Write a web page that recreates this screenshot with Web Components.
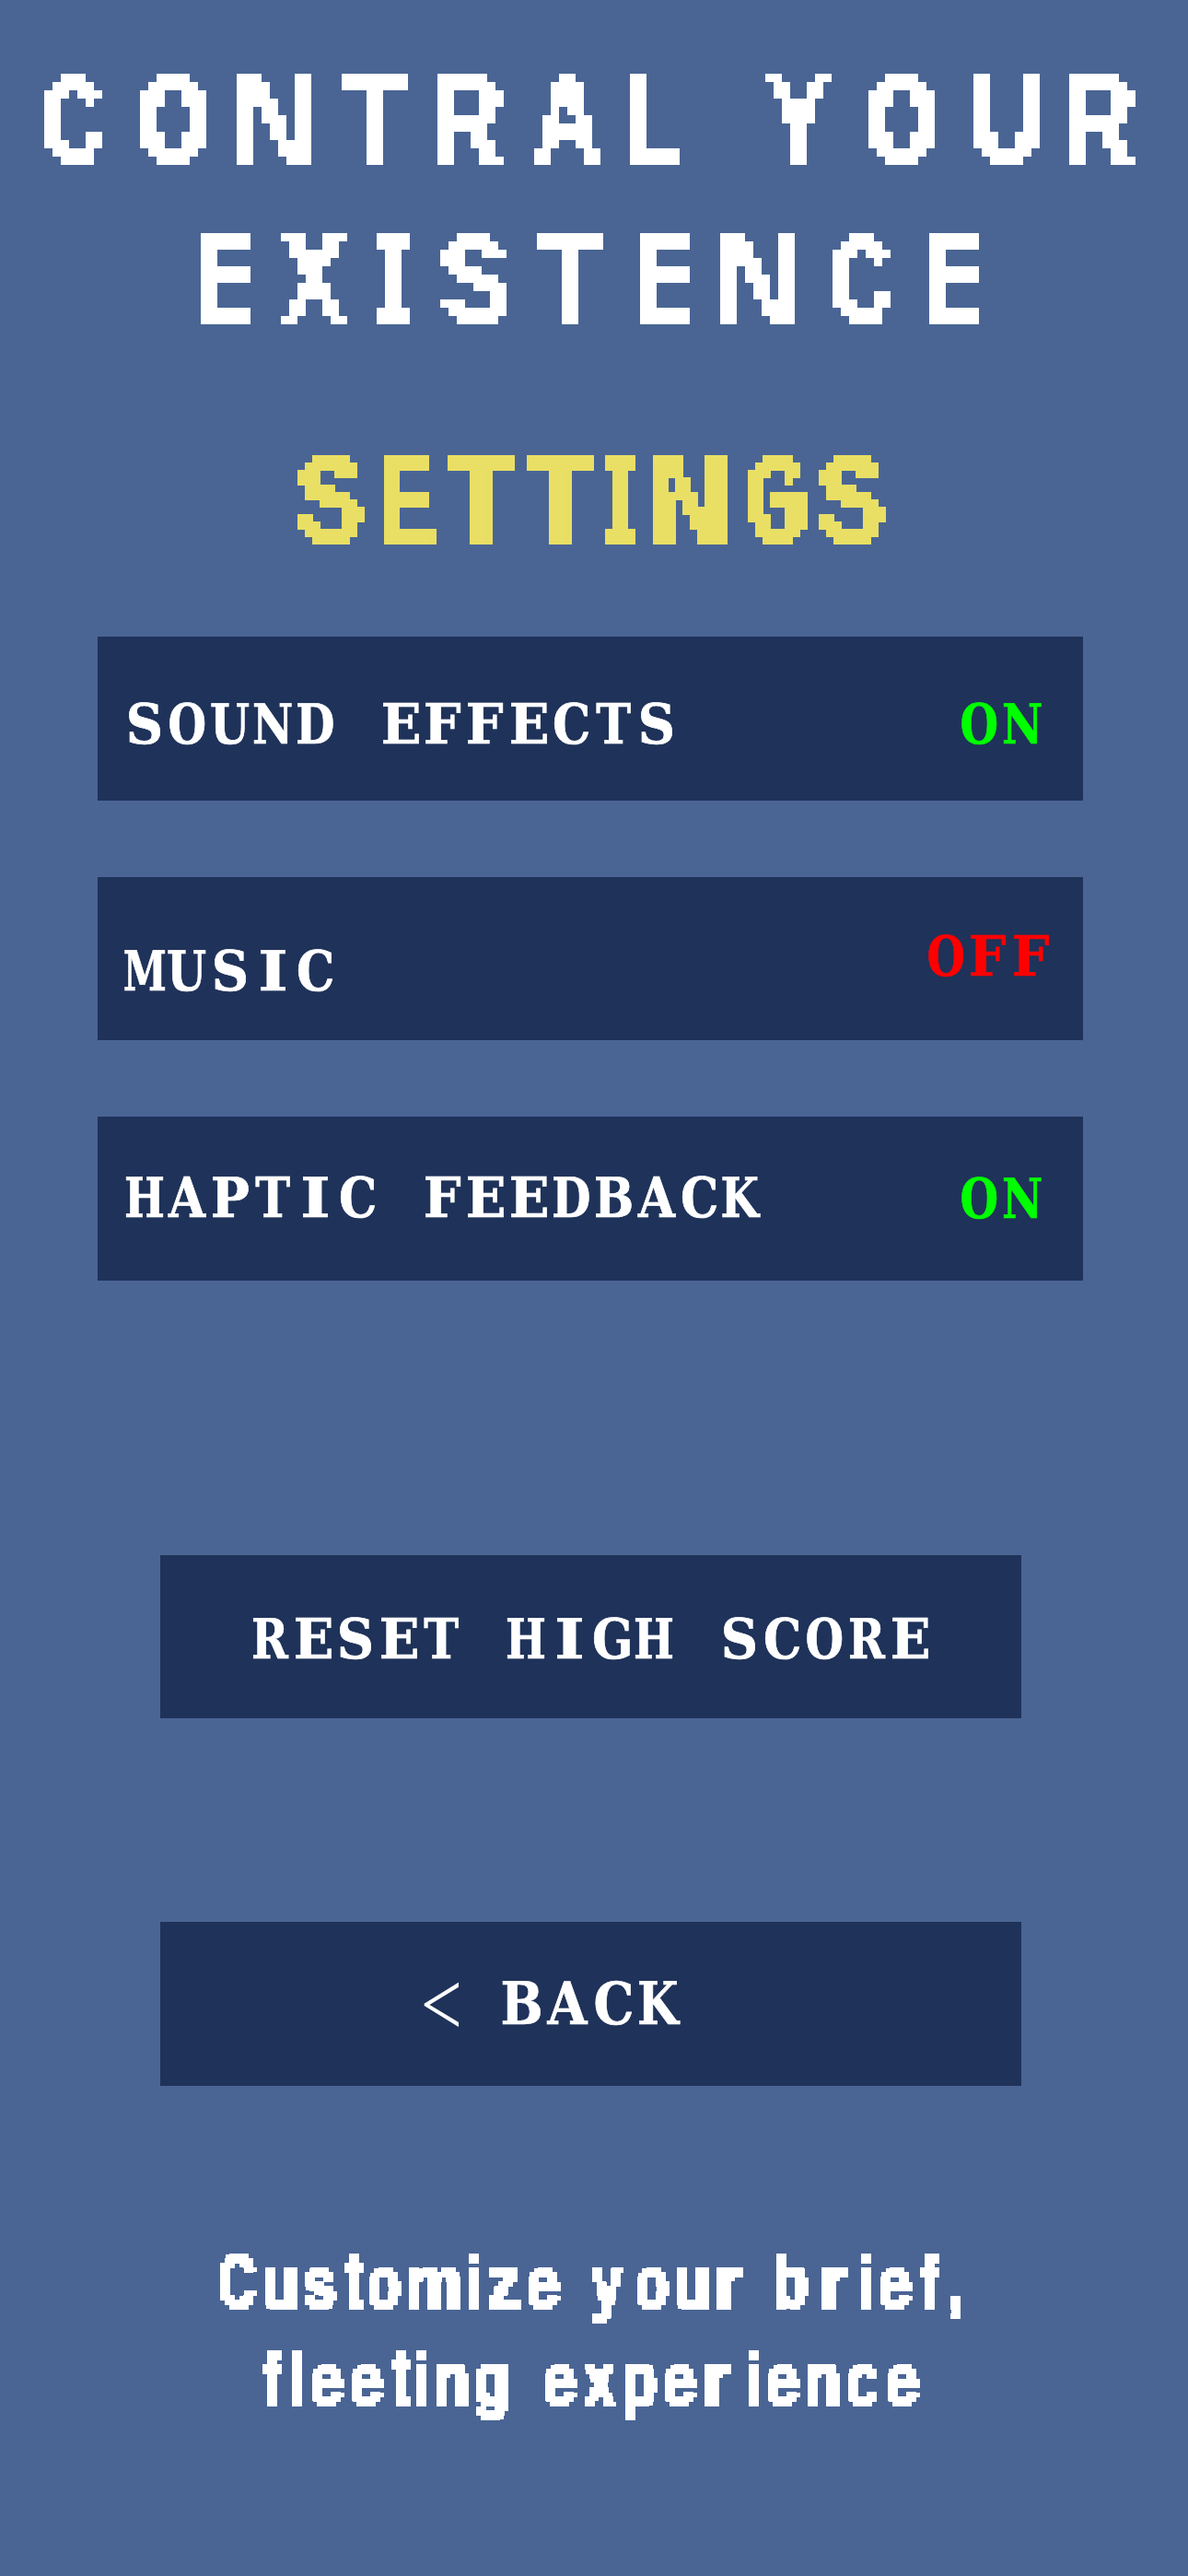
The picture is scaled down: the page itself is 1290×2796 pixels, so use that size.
<!DOCTYPE html>
<html>
<head>
<meta charset="utf-8">
<title>Settings</title>
<style>
    html, body { margin: 0; background: #4a6594; }
</style>
</head>
<body>
<control-screen>
    <pixel-text text="CONTRAL YOUR" cell="9" stroke="2.5" font="bold 150px 'Liberation Mono'" adv="11.6 11.6 12.7 11.6 11.6 11.6 11.6 4.7 12.5 12.6 11.6 8" style="--top:80px"></pixel-text>
    <pixel-text text="EXISTENCE" cell="9" stroke="2.5" font="bold 150px 'Liberation Mono'" adv="9.7 11.5 7.7 11.6 12.5 9.7 13.5 11.7 6" style="--top:47px"></pixel-text>
    <pixel-text text="SETTINGS" cell="8.64" stroke="2.5" font="bold 150px 'Liberation Mono'" adv="10.9 8 9.9 9.9 6 11.9 8.9 8" style="--top:115px;color:#e9df65"></pixel-text>

    <settings-row style="--top:76px;--label-top:66px;--value-top:66px;--pad-l:28px;--pad-r:43px">
        <mono-text slot="label" text="SOUND EFFECTS"></mono-text>
        <mono-text slot="value" text="ON" style="color:#00ff00"></mono-text>
    </settings-row>
    <settings-row style="--top:83px;--label-top:73px;--value-top:57px;--pad-l:28px;--pad-r:33px">
        <mono-text slot="label" text="MUSIC"></mono-text>
        <mono-text slot="value" text="OFF" style="color:#ff0000"></mono-text>
    </settings-row>
    <settings-row style="--top:83px;--label-top:59px;--value-top:60px;--pad-l:28px;--pad-r:43px">
        <mono-text slot="label" text="HAPTIC FEEDBACK"></mono-text>
        <mono-text slot="value" text="ON" style="color:#00ff00"></mono-text>
    </settings-row>

    <menu-button style="--top:298px;--label-top:62px">
        <mono-text text="RESET HIGH SCORE"></mono-text>
    </menu-button>
    <menu-button style="--top:221px;--label-top:58px;--shift:90px">
        <span style="display:inline-block;font:100px/63px 'Liberation Serif',serif;transform:scaleX(.8);margin-right:34px">&lt;</span>
        <mono-text text="BACK" style="--size:63px;--pitch:50px"></mono-text>
    </menu-button>

    <pixel-text text="Customize your brief," cell="5.4" stroke="4.5" font="bold 150px 'Liberation Sans'" adv="9 8 8 5 8 12 4 8 8 4.8 9 8 8 7 5 9.2 7.9 3.9 8 6 2" style="--top:182.5px"></pixel-text>
    <pixel-text text="fleeting experience" cell="5.4" stroke="4.5" font="bold 150px 'Liberation Sans'" adv="6 4 8 8 5 4 8 8 5.9 8 8 8 8 8.8 4 8 8 8 6" style="--top:29px"></pixel-text>
</control-screen>

<script>
// target ink of each pixel glyph, in cells: [width, above baseline, below baseline]
const GLYPHS = {
    C: [7, 11, 0], O: [8, 11, 0], N: [9, 11, 0], T: [8, 11, 0], R: [8, 11, 0], A: [8, 11, 0], L: [6, 11, 0],
    Y: [8, 11, 0], U: [8, 11, 0], E: [6, 11, 0], X: [8, 11, 0], I: [4, 11, 0], S: [8, 11, 0], G: [7, 11, 0],
    u: [6, 8, 0], s: [6, 8, 0], t: [4, 11, 0], o: [6, 8, 0], m: [10, 8, 0], i: [2, 11, 0], z: [6, 8, 0],
    e: [6, 8, 0], y: [6, 8, 3], r: [5, 8, 0], b: [6, 11, 0], f: [4, 11, 0], l: [2, 11, 0], n: [6, 8, 0],
    g: [6, 8, 3], x: [6, 8, 0], p: [6, 8, 3], c: [6, 8, 0], ',': [2, 2, 2]
};
// ink width of the typewriter letters, in px at the 46px pitch
const MONO_WIDTH = { I: 27, M: 44, N: 41, U: 41, H: 41, A: 42, K: 42, T: 38, O: 38, C: 37, G: 39, S: 35 };

const measure = document.createElement('canvas').getContext('2d');

const pixelTemplate = document.createElement('template');
pixelTemplate.innerHTML = `
    <style>
        :host {
            display: block;
            flex: none;
            margin-top: var(--top, 0);
            color: #fff;
        }
        .line {
            display: flex;
            width: max-content;
        }
        .letter {
            flex: none;
            filter: url(#px);
        }
        .space {
            flex: none;
            white-space: pre;
            font-size: 1px;
        }
        .glyph {
            display: block;
            width: max-content;
            white-space: pre;
            transform-origin: 0 0;
        }
    </style>
    <svg width="0" height="0" style="position:absolute">
        <filter id="px" x="0" y="0" width="100%" height="100%" color-interpolation-filters="sRGB">
            <feFlood></feFlood>
            <feComposite></feComposite>
            <feTile result="grid"></feTile>
            <feComposite in="SourceGraphic" in2="grid" operator="in"></feComposite>
            <feComponentTransfer>
                <feFuncA type="discrete" tableValues="0 1"></feFuncA>
            </feComponentTransfer>
            <feMorphology operator="dilate"></feMorphology>
        </filter>
    </svg>
    <div class="line"></div>
`;

class PixelText extends HTMLElement {
    constructor() {
        super();
        this.attachShadow({ mode: 'open' });
        this.shadowRoot.appendChild(pixelTemplate.content.cloneNode(true));
    }

    setupFilter(cell) {
        const root = this.shadowRoot;
        // whole-pixel square that covers one (maybe fractional) cell
        const square = Math.ceil(cell - 0.3);
        const dot = square % 2 ? 1 : 2;
        const at = Math.round((cell - dot) / 2);
        const flood = root.querySelector('feFlood');
        flood.setAttribute('x', at);
        flood.setAttribute('y', at);
        flood.setAttribute('width', dot);
        flood.setAttribute('height', dot);
        const tile = root.querySelector('feComposite');
        tile.setAttribute('width', cell);
        tile.setAttribute('height', cell);
        root.querySelector('feMorphology').setAttribute('radius', (square - dot) / 2);
    }

    connectedCallback() {
        const text = this.getAttribute('text');
        const font = this.getAttribute('font');
        const stroke = this.getAttribute('stroke') || 0;
        const adv = this.getAttribute('adv').split(' ').map(Number);
        const cell = Number(this.getAttribute('cell'));
        const size = parseFloat(font.match(/(\d+)px/)[1]);
        const line = this.shadowRoot.querySelector('.line');
        this.setupFilter(cell);

        // the letters sit on whole pixels, so the same letter always samples the same
        let pen = 0;
        [...text].forEach((ch, i) => {
            const left = Math.round(pen);
            pen += adv[i] * cell;
            const next = Math.round(pen);
            const box = GLYPHS[ch];
            const letter = document.createElement('span');
            if (!box) {
                // a space only moves the pen
                letter.className = 'space';
                letter.style.width = next - left + 'px';
                letter.textContent = ch;
                line.appendChild(letter);
                return;
            }
            const [w, up, down] = box;
            letter.className = 'letter';
            letter.style.width = w * cell + 'px';
            letter.style.height = 14 * cell + 'px';
            letter.style.marginRight = next - left - w * cell + 'px';

            const glyph = document.createElement('span');
            glyph.className = 'glyph';
            glyph.textContent = ch;
            glyph.style.font = font + ', sans-serif';
            glyph.style.lineHeight = size + 'px';
            // N and U close up when they are thickened
            glyph.style.webkitTextStroke = ('NU'.includes(ch) ? 0 : stroke) + 'px currentColor';

            measure.font = font;
            const m = measure.measureText(ch);
            const baseline = (size + m.fontBoundingBoxAscent - m.fontBoundingBoxDescent) / 2;
            const sx = w * cell / (m.actualBoundingBoxRight + m.actualBoundingBoxLeft);
            const sy = (up + down) * cell / (m.actualBoundingBoxAscent + m.actualBoundingBoxDescent);
            const tx = m.actualBoundingBoxLeft * sx;
            const ty = (11 - up) * cell - (baseline - m.actualBoundingBoxAscent) * sy;
            glyph.style.transform = `translate(${tx}px, ${ty}px) scale(${sx}, ${sy})`;

            letter.appendChild(glyph);
            line.appendChild(letter);
        });

        this.style.width = 2 * Math.round(pen / 2) + 'px';
        this.style.height = Math.round(14 * cell) + 'px';
    }
}

const monoTemplate = document.createElement('template');
monoTemplate.innerHTML = `
    <style>
        :host {
            display: inline-flex;
            flex: none;
            font: bold var(--size, 59px)/var(--size, 59px) 'DejaVu Serif', serif;
            -webkit-text-stroke: 0.7px currentColor;
            color: #fff;
        }
        .cell {
            display: inline-block;
            width: var(--pitch, 46.3px);
            white-space: pre;
        }
        .cell b {
            display: block;
            width: max-content;
            font-weight: inherit;
            transform-origin: 0 0;
        }
    </style>
`;

class MonoText extends HTMLElement {
    constructor() {
        super();
        this.attachShadow({ mode: 'open' });
        this.shadowRoot.appendChild(monoTemplate.content.cloneNode(true));
    }

    connectedCallback() {
        const size = parseFloat(this.style.getPropertyValue('--size')) || 59;
        const pitch = parseFloat(this.style.getPropertyValue('--pitch')) || 46.3;
        measure.font = `bold ${size}px 'DejaVu Serif'`;
        [...this.getAttribute('text')].forEach(ch => {
            const cell = document.createElement('span');
            cell.className = 'cell';
            const b = document.createElement('b');
            b.textContent = ch;
            const m = measure.measureText(ch);
            const target = (MONO_WIDTH[ch] || 39) * size / 59;
            const ink = m.actualBoundingBoxRight + m.actualBoundingBoxLeft;
            if (ink > 0) {
                const sx = target / ink;
                b.style.transform = `translateX(${(pitch - target) / 2 + m.actualBoundingBoxLeft * sx}px) scaleX(${sx})`;
            }
            cell.appendChild(b);
            this.shadowRoot.appendChild(cell);
        });
    }
}

const rowTemplate = document.createElement('template');
rowTemplate.innerHTML = `
    <style>
        :host {
            display: flex;
            flex: none;
            justify-content: space-between;
            align-items: flex-start;
            box-sizing: border-box;
            width: 1070px;
            height: 177.5px;
            margin-top: var(--top, 0);
            padding: 0 var(--pad-r, 43px) 0 var(--pad-l, 28px);
            background: #1f3259;
        }
        .label { padding-top: var(--label-top, 66px); }
        .value { padding-top: var(--value-top, 66px); }
    </style>
    <div class="label"><slot name="label"></slot></div>
    <div class="value"><slot name="value"></slot></div>
`;

class SettingsRow extends HTMLElement {
    constructor() {
        super();
        this.attachShadow({ mode: 'open' });
        this.shadowRoot.appendChild(rowTemplate.content.cloneNode(true));
    }
}

const buttonTemplate = document.createElement('template');
buttonTemplate.innerHTML = `
    <style>
        :host {
            display: block;
            flex: none;
            box-sizing: border-box;
            width: 935px;
            height: 177.5px;
            margin-top: var(--top, 0);
            padding-top: var(--label-top, 62px);
            padding-right: var(--shift, 0);
            background: #1f3259;
            color: #fff;
        }
        .inner {
            display: flex;
            justify-content: center;
            align-items: center;
        }
    </style>
    <div class="inner"><slot></slot></div>
`;

class MenuButton extends HTMLElement {
    constructor() {
        super();
        this.attachShadow({ mode: 'open' });
        this.shadowRoot.appendChild(buttonTemplate.content.cloneNode(true));
    }
}

const screenTemplate = document.createElement('template');
screenTemplate.innerHTML = `
    <style>
        :host {
            display: flex;
            flex-direction: column;
            align-items: center;
            box-sizing: border-box;
            width: 1290px;
            height: 2796px;
            padding-right: 8px;
            background: #4a6594;
            overflow: hidden;
        }
    </style>
    <slot></slot>
`;

class ControlScreen extends HTMLElement {
    constructor() {
        super();
        this.attachShadow({ mode: 'open' });
        this.shadowRoot.appendChild(screenTemplate.content.cloneNode(true));
    }
}

window.customElements.define('pixel-text', PixelText);
window.customElements.define('mono-text', MonoText);
window.customElements.define('settings-row', SettingsRow);
window.customElements.define('menu-button', MenuButton);
window.customElements.define('control-screen', ControlScreen);
</script>
</body>
</html>
